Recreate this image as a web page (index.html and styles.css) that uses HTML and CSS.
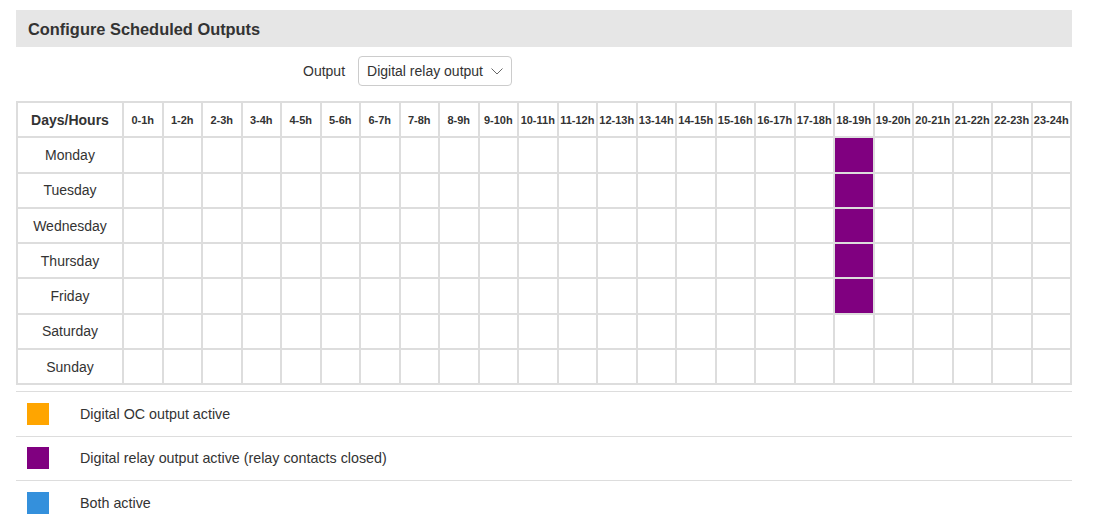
FILE: index.html
```html
<!DOCTYPE html>
<html>
<head>
<meta charset="utf-8">
<link rel="stylesheet" href="styles.css">
</head>
<body>
<div class="page">
  <div class="panel-title">Configure Scheduled Outputs</div>
  <div class="form-row">
    <label class="form-label">Output</label>
    <div class="select">
      <span>Digital relay output</span>
      <svg class="chev" width="12" height="7" viewBox="0 0 12 7"><polyline points="0.5,0.5 6,6 11.5,0.5" fill="none" stroke="#666" stroke-width="1"/></svg>
    </div>
  </div>
  <table class="sched">
    <colgroup><col class="c-day"></colgroup>
    <thead>
      <tr>
        <th class="h-day">Days/Hours</th>
        <th>0-1h</th><th>1-2h</th><th>2-3h</th><th>3-4h</th><th>4-5h</th><th>5-6h</th><th>6-7h</th><th>7-8h</th><th>8-9h</th><th>9-10h</th><th>10-11h</th><th>11-12h</th><th>12-13h</th><th>13-14h</th><th>14-15h</th><th>15-16h</th><th>16-17h</th><th>17-18h</th><th>18-19h</th><th>19-20h</th><th>20-21h</th><th>21-22h</th><th>22-23h</th><th>23-24h</th>
      </tr>
    </thead>
    <tbody id="rows"></tbody>
  </table>
  <div class="legend">
    <div class="legend-row"><span class="sw sw-oc"></span><span>Digital OC output active</span></div>
    <div class="legend-row"><span class="sw sw-relay"></span><span>Digital relay output active (relay contacts closed)</span></div>
    <div class="legend-row"><span class="sw sw-both"></span><span>Both active</span></div>
  </div>
</div>
<script src="app.js"></script>
</body>
</html>
```
FILE: app.js
```js
var days = ["Monday","Tuesday","Wednesday","Thursday","Friday","Saturday","Sunday"];
var tb = document.getElementById("rows");
days.forEach(function(d, i){
  var tr = document.createElement("tr");
  var td = document.createElement("td");
  td.className = "day";
  td.textContent = d;
  tr.appendChild(td);
  for (var h = 0; h < 24; h++) {
    var c = document.createElement("td");
    if (h === 18 && i < 5) c.className = "relay";
    tr.appendChild(c);
  }
  tb.appendChild(tr);
});
```
FILE: styles.css
```css
body {
  margin: 0;
  font-family: "Liberation Sans", Arial, sans-serif;
  font-size: 14px;
  color: #333;
  background: #fff;
}
.page {
  padding: 10px 25px 0 16px;
  width: 1056px;
}
.panel-title {
  height: 37px;
  line-height: 38px;
  background: #e6e6e6;
  padding-left: 12px;
  font-size: 16.4px;
  font-weight: bold;
  color: #333;
}
.form-row {
  display: flex;
  align-items: center;
  margin-top: 9px;
  padding-left: 287px;
  height: 30px;
}
.form-label {
  margin-right: 13px;
}
.select {
  box-sizing: border-box;
  width: 154px;
  height: 30px;
  border: 1px solid #ccc;
  border-radius: 4px;
  display: flex;
  align-items: center;
  justify-content: space-between;
  padding: 0 8px 0 8px;
}
.chev { margin-top: 1px; }
.sched {
  margin-top: 15px;
  width: 1056px;
  border-collapse: separate;
  border-spacing: 0;
  border-top: 2px solid #ddd;
  border-left: 2px solid #ddd;
  table-layout: fixed;
}
.c-day { width: 106px; }
.sched tr { height: 35.3px; }
.sched th, .sched td {
  border-right: 2px solid #ddd;
  border-bottom: 2px solid #ddd;
  padding: 0;
  line-height: 16px;
  text-align: center;
  vertical-align: middle;
}
.sched th {
  font-size: 11px;
  font-weight: bold;
  white-space: nowrap;
}
.sched th.h-day { font-size: 14px; }
.sched td.relay { background: #800080; }
.legend { margin-top: 6px; font-size: 14.3px; }
.legend-row {
  display: flex;
  align-items: center;
  height: 43.4px;
  border-top: 1px solid #ddd;
  padding-left: 11px;
}
.sw {
  width: 22px;
  height: 22px;
  margin-right: 31px;
}
.sw-oc { background: #ffa500; }
.sw-relay { background: #800080; }
.sw-both { background: #3490dc; }
```
